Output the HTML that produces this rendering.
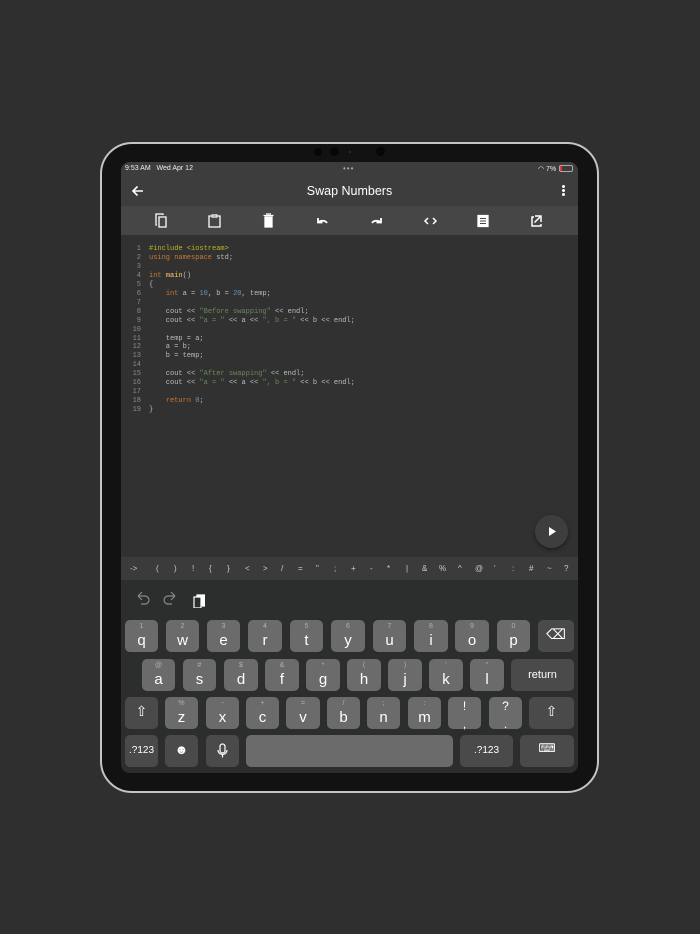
<!DOCTYPE html>
<html><head><meta charset="utf-8"><style>
*{margin:0;padding:0;box-sizing:border-box}
body{width:700px;height:934px;background:#2f2f2f;position:relative;overflow:hidden;font-family:"Liberation Sans",sans-serif}
.dev{position:absolute;left:100px;top:142px;width:499px;height:651px;border-radius:32px;background:#121212;border:2px solid #c4c4c4}
.scr{position:absolute;left:121px;top:162px;width:457px;height:611px;border-radius:9px;overflow:hidden;background:#313131}
.a{position:absolute}
.code{position:absolute;left:0;top:83px;font-family:"Liberation Mono",monospace;font-size:7px;line-height:8.95px;color:#b9bdbf;white-space:pre}
.ln{display:inline-block;width:20px;text-align:right;color:#8a8a8a;margin-right:8px}
.k{color:#cc7832}.m{color:#ffc66d}.n{color:#6897bb}.s{color:#6a8759}.p{color:#bbb529}
.sym{position:absolute;left:0;top:557px;width:457px;height:23px;background:#3b3b3b;font-size:8px;color:#ccc}
.sym span{position:absolute;top:7px;line-height:9px}
.key{position:absolute;height:32px;border-radius:5px;background:#6b6b6b;color:#fff;text-align:center}
.key b{position:absolute;left:0;right:0;bottom:3px;font-weight:normal;font-size:15px}
.key i{position:absolute;left:0;right:0;top:3px;font-style:normal;font-size:7px;color:#b0b0b0}
.fn{background:#4a4a4a}
.fn span{position:absolute;left:0;right:0;top:10px;font-size:11px}
</style></head><body>
<div class="a" style="left:596px;top:185px;width:3px;height:24px;background:#aaa;border-radius:1px"></div>
<div class="a" style="left:596px;top:214px;width:3px;height:24px;background:#aaa;border-radius:1px"></div>
<div class="dev"></div>
<div class="a" style="left:314px;top:148px;width:8px;height:8px;border-radius:50%;background:#070707"></div>
<div class="a" style="left:330px;top:147px;width:9px;height:9px;border-radius:50%;background:#070707"></div>
<div class="a" style="left:349px;top:151px;width:2px;height:2px;border-radius:50%;background:#234"></div>
<div class="a" style="left:376px;top:147px;width:9px;height:9px;border-radius:50%;background:#070707"></div>
<div class="scr">
 <div class="a" style="left:0;top:0;width:457px;height:73px;background:#3d3d3d"></div>
 <div class="a" style="left:4px;top:3px;font-size:7px;color:#eee">9:53 AM&nbsp;&nbsp;&nbsp;Wed Apr 12</div>
 <div class="a" style="left:222px;top:2px;font-size:8px;color:#aaa;letter-spacing:1px">•••</div>
 <div class="a" style="left:417px;top:3px;font-size:7px;color:#eee">◠ 7%</div>
 <div class="a" style="left:438px;top:3px;width:14px;height:7px;border:1px solid #aaa;border-radius:2px"><div style="width:2px;height:5px;background:#e33"></div></div>
 <svg class="a" style="left:10px;top:22px" width="14" height="14" viewBox="0 0 14 14"><path d="M12 7H2M6.5 2.5L2 7l4.5 4.5" stroke="#fff" stroke-width="1.6" fill="none"/></svg>
 <div class="a" style="left:0;width:457px;top:22px;text-align:center;font-size:12.5px;color:#fff">Swap Numbers</div>
 <div class="a" style="left:441px;top:23px;width:3px;height:3px;background:#fff;border-radius:50%;box-shadow:0 4px #fff,0 8px #fff"></div>
 <div class="a" style="left:0;top:44px;width:457px;height:29px;background:#464646"></div>
 <svg class="a" style="left:0;top:44px" width="457" height="29" viewBox="0 0 457 29" fill="none" stroke="#fff" stroke-width="1.3">
  <path d="M36 19h-1V8h7v1M38 11h7v10h-7z"/>
  <path d="M90 10h-2v11h11V10h-2M91 9h5v2h-5z"/>
  <path d="M144 11h7v10h-7zM142.5 9.5h10M145 8h5" fill="#fff"/>
  <path d="M197 17a5 4 0 0 1 9 0M197 12v4.5h4.5" stroke-width="1.8"/>
  <path d="M260 17a5 4 0 0 0-9 0M260 12v4.5h-4.5" stroke-width="1.8"/>
  <path d="M307 12l-3 3 3 3M312 12l3 3-3 3" stroke-width="1.5"/>
  <path d="M357 9.5h10v11h-10z" fill="#fff"/>
  <path d="M359 12.5h6M359 15h6M359 17.5h6" stroke="#464646" stroke-width="0.9"/>
  <path d="M413 11h-2v9h9v-2M414 10h6v6M420 10l-6.5 6.5" stroke-width="1.5"/>
 </svg>
 <div class="code"><span class="ln">1</span><span class="p">#include &lt;iostream&gt;</span>
<span class="ln">2</span><span class="k">using namespace</span> std;
<span class="ln">3</span>
<span class="ln">4</span><span class="k">int</span> <span class="m">main</span>()
<span class="ln">5</span>{
<span class="ln">6</span>    <span class="k">int</span> a = <span class="n">10</span>, b = <span class="n">20</span>, temp;
<span class="ln">7</span>
<span class="ln">8</span>    cout &lt;&lt; <span class="s">"Before swapping"</span> &lt;&lt; endl;
<span class="ln">9</span>    cout &lt;&lt; <span class="s">"a = "</span> &lt;&lt; a &lt;&lt; <span class="s">", b = "</span> &lt;&lt; b &lt;&lt; endl;
<span class="ln">10</span>
<span class="ln">11</span>    temp = a;
<span class="ln">12</span>    a = b;
<span class="ln">13</span>    b = temp;
<span class="ln">14</span>
<span class="ln">15</span>    cout &lt;&lt; <span class="s">"After swapping"</span> &lt;&lt; endl;
<span class="ln">16</span>    cout &lt;&lt; <span class="s">"a = "</span> &lt;&lt; a &lt;&lt; <span class="s">", b = "</span> &lt;&lt; b &lt;&lt; endl;
<span class="ln">17</span>
<span class="ln">18</span>    <span class="k">return</span> <span class="n">0</span>;
<span class="ln">19</span>}</div>
 <div class="a" style="left:414px;top:353px;width:33px;height:33px;border-radius:50%;background:#3e3e3e;box-shadow:0 2px 4px rgba(0,0,0,.4)"></div>
 <svg class="a" style="left:426px;top:364px" width="10" height="11"><path d="M2 1l7 4.5L2 10z" fill="#fff"/></svg>
 <div class="a" style="left:0;top:418px;width:457px;height:193px;background:#2b2e2d"></div>
 <svg class="a" style="left:14px;top:428px" width="70" height="18" fill="none" stroke="#888" stroke-width="1.2"><path d="M3 6l4-4M3 6l4 4M3 6h7a4 4 0 0 1 0 8H6"/><path d="M40 6l-4-4M40 6l-4 4M40 6h-7a4 4 0 0 0 0 8h4"/><path d="M62 5h8v11h-8z" fill="#fff" stroke="#fff"/><path d="M59 7h7v11h-7z" fill="#2b2e2d" stroke="#fff"/></svg>
</div>
<div class="sym" style="left:121px;top:557px">
  <span style="left:9px">-&gt;</span><span style="left:35px">(</span><span style="left:53px">)</span><span style="left:71px">!</span><span style="left:88px">{</span><span style="left:106px">}</span><span style="left:124px">&lt;</span><span style="left:142px">&gt;</span><span style="left:160px">/</span><span style="left:177px">=</span><span style="left:195px">"</span><span style="left:213px">;</span><span style="left:230px">+</span><span style="left:249px">-</span><span style="left:266px">*</span><span style="left:285px">|</span><span style="left:301px">&amp;</span><span style="left:318px">%</span><span style="left:337px">^</span><span style="left:354px">@</span><span style="left:373px">'</span><span style="left:391px">:</span><span style="left:408px">#</span><span style="left:426px">~</span><span style="left:443px">?</span>
</div>
<div class="key" style="left:125px;top:620px;width:33px"><i>1</i><b>q</b></div>
<div class="key" style="left:166px;top:620px;width:33px"><i>2</i><b>w</b></div>
<div class="key" style="left:207px;top:620px;width:33px"><i>3</i><b>e</b></div>
<div class="key" style="left:248px;top:620px;width:34px"><i>4</i><b>r</b></div>
<div class="key" style="left:290px;top:620px;width:33px"><i>5</i><b>t</b></div>
<div class="key" style="left:331px;top:620px;width:34px"><i>6</i><b>y</b></div>
<div class="key" style="left:373px;top:620px;width:33px"><i>7</i><b>u</b></div>
<div class="key" style="left:414px;top:620px;width:34px"><i>8</i><b>i</b></div>
<div class="key" style="left:455px;top:620px;width:34px"><i>9</i><b>o</b></div>
<div class="key" style="left:497px;top:620px;width:33px"><i>0</i><b>p</b></div>
<div class="key fn" style="left:538px;top:620px;width:36px"><span style="font-size:14px;top:6px">⌫</span></div>
<div class="key" style="left:142px;top:659px;width:33px"><i>@</i><b>a</b></div>
<div class="key" style="left:183px;top:659px;width:33px"><i>#</i><b>s</b></div>
<div class="key" style="left:224px;top:659px;width:34px"><i>$</i><b>d</b></div>
<div class="key" style="left:265px;top:659px;width:34px"><i>&amp;</i><b>f</b></div>
<div class="key" style="left:306px;top:659px;width:34px"><i>*</i><b>g</b></div>
<div class="key" style="left:347px;top:659px;width:34px"><i>(</i><b>h</b></div>
<div class="key" style="left:388px;top:659px;width:34px"><i>)</i><b>j</b></div>
<div class="key" style="left:429px;top:659px;width:34px"><i>'</i><b>k</b></div>
<div class="key" style="left:470px;top:659px;width:34px"><i>"</i><b>l</b></div>
<div class="key fn" style="left:511px;top:659px;width:63px"><span>return</span></div>
<div class="key fn" style="left:125px;top:697px;width:33px"><span style="font-size:14px;top:6px">⇧</span></div>
<div class="key" style="left:165px;top:697px;width:33px"><i>%</i><b>z</b></div>
<div class="key" style="left:206px;top:697px;width:33px"><i>-</i><b>x</b></div>
<div class="key" style="left:246px;top:697px;width:33px"><i>+</i><b>c</b></div>
<div class="key" style="left:286px;top:697px;width:34px"><i>=</i><b>v</b></div>
<div class="key" style="left:327px;top:697px;width:33px"><i>/</i><b>b</b></div>
<div class="key" style="left:367px;top:697px;width:33px"><i>;</i><b>n</b></div>
<div class="key" style="left:408px;top:697px;width:33px"><i>:</i><b>m</b></div>
<div class="key" style="left:448px;top:697px;width:33px"><span style="top:4px;font-size:12px;line-height:10px">!<br>,</span></div>
<div class="key" style="left:489px;top:697px;width:33px"><span style="top:4px;font-size:12px;line-height:10px">?<br>.</span></div>
<div class="key fn" style="left:529px;top:697px;width:45px"><span style="font-size:14px;top:6px">⇧</span></div>
<div class="key fn" style="left:125px;top:735px;width:33px"><span style="font-size:10px">.?123</span></div>
<div class="key fn" style="left:165px;top:735px;width:33px"><span style="font-size:13px;top:7px">☻</span></div>
<div class="key fn" style="left:206px;top:735px;width:33px"><svg style="position:absolute;left:11px;top:8px" width="11" height="16" fill="none" stroke="#fff" stroke-width="1.2"><rect x="3" y="1" width="5" height="9" rx="2.5"/><path d="M1 7a4.5 4.5 0 0 0 9 0M5.5 11.5v3"/></svg></div>
<div class="key" style="left:246px;top:735px;width:207px"></div>
<div class="key fn" style="left:460px;top:735px;width:53px"><span style="font-size:10px">.?123</span></div>
<div class="key fn" style="left:520px;top:735px;width:54px"><span style="font-size:12px;top:6px">⌨</span></div>
</body></html>
